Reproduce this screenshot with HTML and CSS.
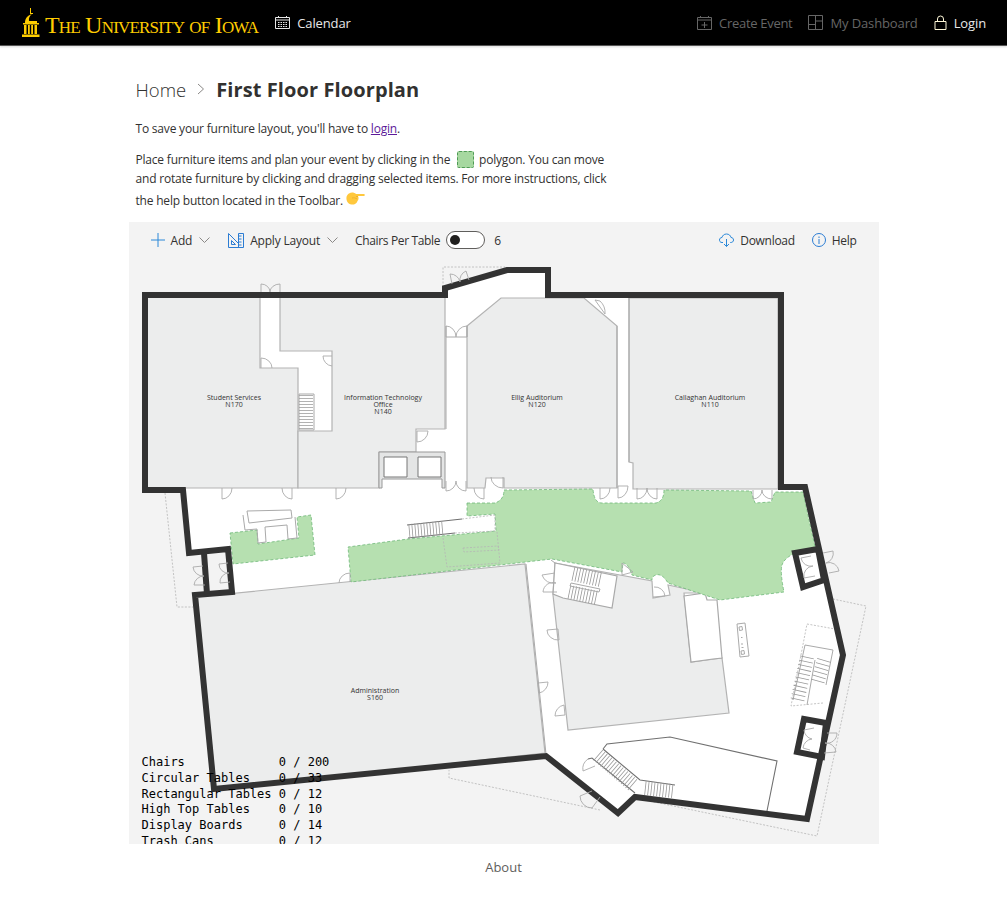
FILE: index.html
```html
<!DOCTYPE html>
<html lang="en">
<head>
    <meta charset="UTF-8">
    <meta name="viewport" content="width=device-width, initial-scale=1.0">
    <title>First Floor Floorplan</title>
    <link rel="stylesheet" href="styles.css">
</head>
<body>
    <!-- Top bar -->
    <header class="topbar">
        <a class="brand" href="#">
            <svg class="brand-mark" width="18" height="30" viewBox="0 0 18 30">
                <path d="M8 0h1v6H8zM9 5h2v1H9z"/>
                <path d="M3 15c0-4 2-7.500 7-9-2.500 2-3.500 4-3 7h8v2z"/>
                <path d="M1 15h16v1.500H1zM2 17h2.500v9H2zM6 17h1.800v9H6zM9.200 17H11v9H9.200zM12.500 17H15v9h-2.500zM0 26.500h17.500V29H0z"/>
            </svg>
            <span class="brand-name">The University of Iowa</span>
        </a>
        <a class="nav-link nav-calendar" href="#">
            <svg width="15" height="15" viewBox="0 0 15 15" fill="none" stroke="currentColor">
                <path d="M.5 2.500h14v11H.5zM.5 5h14M3.500 1v2M11.500 1v2"/>
                <path stroke-dasharray="1.500 1" d="M3 7.500h9M3 9.500h9M3 11.500h9"/>
            </svg>
            Calendar
        </a>
        <nav class="nav-right">
            <a class="nav-link nav-muted nav-create" href="#">
                <svg width="15" height="15" viewBox="0 0 15 15" fill="none" stroke="currentColor">
                    <path d="M.5 2.500h14v12H.5zM.5 5h14M3.500 1v2M11.500 1v2M7.500 7v6M4.500 10h6"/>
                </svg>
                Create Event
            </a>
            <a class="nav-link nav-muted" href="#">
                <svg width="15" height="15" viewBox="0 0 15 15" fill="none" stroke="currentColor">
                    <path d="M.5.500h14v14H.5zM7.500.500v14M.5 9.500h7M7.500 6h7"/>
                </svg>
                My Dashboard
            </a>
            <a class="nav-link" href="#">
                <svg width="13" height="15" viewBox="0 0 13 15" fill="none" stroke="#fff8d8">
                    <path d="M1 6.500h11v8H1zM3.500 6.500V4a3 3 0 0 1 6 0v2.500"/>
                </svg>
                Login
            </a>
        </nav>
    </header>

    <main class="page">
        <div class="crumbs">
            <a class="crumb-home" href="#">Home</a>
            <svg class="crumb-sep" width="8" height="12" viewBox="0 0 8 12" fill="none" stroke="#8a8886">
                <path d="M1 1l5.500 5L1 11"/>
            </svg>
            <h1 class="crumb-title">First Floor Floorplan</h1>
        </div>

        <p class="intro">To save your furniture layout, you'll have to <a href="#">login</a>.</p>
        <p class="intro intro-long">
            Place furniture items and plan your event by clicking in the
            <span class="swatch"></span>
            polygon. You can move and rotate furniture by clicking and dragging selected items. For more instructions, click the help button located in the Toolbar.
            <svg class="hand" width="19" height="15" viewBox="0 0 19 15">
                <path fill="#ffc83d" d="M3 1.500c2-1.500 5-1.500 7 .5h8c1 0 1 2 0 2h-6c1 2 .5 4-.5 5-1 3-4 4-6 3.500C2 12 0 9 .5 5 .700 3.500 2 2 3 1.500z"/>
                <path fill="none" stroke="#e0a526" stroke-width=".6" d="M10 4.500h2M6 6c2-.5 4 0 5 1"/>
            </svg>
        </p>

        <section class="planner">
            <div class="toolbar">
                <button class="tool">
                    <svg width="14" height="14" viewBox="0 0 14 14" stroke="#2b88d8" fill="none"><path d="M7 0v14M0 7h14"/></svg>
                    Add
                    <svg class="chev" width="11" height="6" viewBox="0 0 11 6" fill="none" stroke="#8a8886"><path d="M.5.500l5 5 5-5"/></svg>
                </button>
                <button class="tool tool-layout">
                    <svg width="16" height="15" viewBox="0 0 16 15" stroke="#2b7cd3" fill="none">
                        <path d="M.5.500v14h15V.5h-5v14M.5.500l10 10M3.500 11.500h4l-4-4zM10.500 3h3M10.500 6h3M10.500 9h3M10.500 12h3"/>
                    </svg>
                    Apply Layout
                    <svg class="chev" width="11" height="6" viewBox="0 0 11 6" fill="none" stroke="#8a8886"><path d="M.5.500l5 5 5-5"/></svg>
                </button>
                <div class="chairs">
                    <span>Chairs Per Table</span>
                    <span class="toggle"></span>
                    <span class="chairs-count">6</span>
                </div>
                <div class="toolbar-end">
                    <button class="tool">
                        <svg width="15" height="14" viewBox="0 0 15 14" stroke="#2b88d8" fill="none">
                            <path d="M4 9.500H3C1 9.500.5 8 .5 7c0-1.500 1-2.500 2.500-2.500C3.500 2.500 5 1 7.500 1c2.500 0 4 1.500 4.500 3.500 1.500 0 2.500 1 2.500 2.500s-1 2.500-3 2.500h-.5M7.500 6v7.500M5 11l2.500 2.500L10 11"/>
                        </svg>
                        Download
                    </button>
                    <button class="tool">
                        <svg width="14" height="14" viewBox="0 0 14 14" stroke="#2b7cd3" fill="none">
                            <circle cx="7" cy="7" r="6.500"/><path d="M7 6v5M7 3.500v1.500"/>
                        </svg>
                        Help
                    </button>
                </div>
            </div>

            <svg class="plan" width="750" height="586" viewBox="129 258 750 586">
                <!-- dashed site outline -->
                <path class="site" d="M443 287V267H505M165 493L177 607H193M833 599L866 606 817 836 635 798M600 810L449 778V770"/>

                <!-- floor -->
                <path class="floor" d="M145 295H445V288L507 270H548V295H781V487H805L843 655 807 819 635 797 618 813 546 756 214 789 195 595 232 592 228 549 189 553 183 490H145Z"/>

                <!-- rooms -->
                <path class="room" d="M147 297H260V368H298V488H147Z"/>
                <path class="room" d="M280 297H445V429H416V452H379V488H298V431H332V351H280Z"/>
                <path class="room" d="M467 326L501 298H584L617 326V488H504V478H486L485 488H467Z"/>
                <path class="room" d="M629 298H778V489H633V463L629 462Z"/>
                <path class="room" d="M197 597L525 564 545 753 216 790Z"/>
                <path class="room" d="M555 563L652 581 653 598 670 595 668 585 705 593H684L691 662 722 658 729 713 568 730 553 595Z"/>
                <path class="room-open" d="M684 596L705 593 707 600H717L722 658 713 659 691 662ZM555 563L617 576 612 608 563 598 553 594Z"/>
                <path class="line" d="M446 337V429M467 326V337M446 337H467M446 326V337M551 560L555 563M526 564L546 754M629 298V462M617 326V488"/>

                <!-- elevators -->
                <path class="lift" d="M379 452H445V488H442V479H382V488H379Z"/>
                <path class="lift-car" d="M384 457H407V477H384ZM418 457H441V477H418Z"/>

                <!-- usable area -->
                <path class="area" d="M467 503H495Q504 500 504 490L593 489Q594 503 602 503H656Q664 501 664 490L751 491 755 503 771 502 775 492H803L815 547Q786 553 782 565 780 572 784 592L720 600 668 583Q662 573 656 575 652 576 652 580L632 575Q628 563 623 563L622 572 552 559 351 582 348 547 408 539 496 531 495 514 467 516Z"/>
                <path class="area" d="M230 533L257 530 258 544 299 538 297 517 311 515 315 555 233 564Z"/>

                <!-- fixtures -->
                <path class="line" d="M247 511L291 510 292 518 249 523ZM243 515L245 530 257 529 258 543 266 542 265 527 287 525 288 539 297 538 295 517"/>
                <path class="site" d="M443 538L447 567 500 563 497 532M463 548L498 546 499 550 464 552ZM807 624L835 629M823 703L791 706 807 624M462 519L495 515V531L455 533"/>
                <path class="line" d="M737 624L745 623 749 656 740 657ZM739 627L742 626.500 742.500 630 739.500 630.500ZM741 637.500h1.500M742 643v2M741.500 647.500h2M741 651L744 650.500 744.500 654 741.500 654.500Z"/>
                <path class="line-dark" d="M407 525L462 519M408 538L455 533"/>
                <line class="tread" x1="409" y1="531" x2="443" y2="528"/>
                <path class="line" d="M299 394H314V430H299Z"/>
                <line class="tread" x1="306" y1="395" x2="306" y2="429"/>

                <!-- stairs, upper right of the south wing -->
                <line class="tread" x1="573" y1="574" x2="601" y2="580"/>
                <line class="tread" x1="569" y1="592" x2="598" y2="598"/>
                <path class="line" d="M571 583L600 589 599 592 570 586Z"/>

                <!-- stairs, east side -->
                <path class="line" d="M805 645L833 650 826 685M805 645L793 700M815 660L807 705"/>
                <line class="tread tread-wide" x1="807" y1="657" x2="797" y2="702"/>
                <line class="tread tread-wide" x1="824" y1="660" x2="817" y2="684"/>

                <!-- stairs and hall, south side -->
                <path class="line-dark" d="M603 749L607 744 670 737 777 761 767 811M603 749L640 780 675 785M588 759L592 758 635 793"/>
                <line class="tread" x1="598" y1="755" x2="634" y2="786"/>
                <line class="tread" x1="645" y1="788" x2="673" y2="791"/>

                <!-- walls -->
                <path class="wall" d="M145 295H445V288L507 270H548V295H781V487H805L843 655 807 819 635 797 618 813 546 756 214 789 195 595 232 592 228 549 189 553 183 490H145Z"/>
                <path class="wall" d="M204 553L207 594M795 553L818 549 824 580 803 587ZM804 719L826 723 822 757 797 752Z"/>

                <!-- doors -->
                <path class="door" d="M261 292V284A9 8 0 0 1 270 292A10 8 0 0 1 280 284V292
                    M452 284L450 274A10 10 0 0 1 460 282A10 10 0 0 1 466 271L469 280
                    M446 337V326A10 11 0 0 1 456 337A11 11 0 0 1 467 326V337
                    M332 356H323A10 10 0 0 0 332 366M261 368V358A11 10 0 0 1 272 368M417 442V431H428A11 11 0 0 1 417 442
                    M222 499V488M222 499A10 11 0 0 0 232 488M292 499V488M292 499A10 11 0 0 1 282 488M336 499V488M336 499A10 11 0 0 0 346 488
                    M446 481V491A10 10 0 0 0 456 481A10 10 0 0 0 466 491V481
                    M484 499V488M484 499A10 11 0 0 1 474 488M503 477V488A12 11 0 0 1 491 477
                    M600 499V488M600 499A10 11 0 0 0 610 488M618 498V486H628A10 12 0 0 1 618 498
                    M637 488V499A10 11 0 0 0 647 488A10 11 0 0 0 657 499V488M753 490V499A9 9 0 0 0 762 490A10 9 0 0 0 772 499V490
                    M595 300L605 314A16 16 0 0 0 600 301Z
                    M811 556L801 558A10 10 0 0 0 813 566A10 10 0 0 0 804 578L815 576
                    M823 553L833 551A10 10 0 0 1 826 563A10 10 0 0 1 839 571L829 573
                    M203 566L193 567A10 10 0 0 0 204 576A10 10 0 0 0 194 585L205 585
                    M228 563L219 564A9 9 0 0 0 229 573A9 9 0 0 0 220 583L230 582
                    M339 583A11 10 0 0 1 350 573V582
                    M555 573L542 575A12 12 0 0 0 556 583A10 10 0 0 0 543 592L557 592
                    M547 630L558 629 559 640A11 10 0 0 1 547 630M548 682L538 683 539 693A11 11 0 0 0 548 682M555 716L565 715 564 705A11 11 0 0 0 555 716
                    M622 563L633 572 622 575ZM653 597L665 596A10 10 0 0 0 654 587
                    M814 728L804 730A10 10 0 0 0 812 739A10 10 0 0 0 803 748L810 750
                    M827 733L837 733A10 10 0 0 1 825 743A10 10 0 0 1 836 752L824 753
                    M595 766L583 771A12 12 0 0 1 588 759M592 791L580 796A12 12 0 0 0 592 808L600 797"/>

                <!-- room labels -->
                <g class="labels">
                    <text x="234" y="400">Student Services</text>
                    <text x="234" y="407">N170</text>
                    <text x="383" y="400">Information Technology</text>
                    <text x="383" y="407">Office</text>
                    <text x="383" y="414">N140</text>
                    <text x="537" y="400">Ellig Auditorium</text>
                    <text x="537" y="407">N120</text>
                    <text x="710" y="400">Callaghan Auditorium</text>
                    <text x="710" y="407">N110</text>
                    <text x="375" y="693">Administration</text>
                    <text x="375" y="700">S160</text>
                </g>
            </svg>

            <pre class="counts">Chairs             0 / 200
Circular Tables    0 / 33
Rectangular Tables 0 / 12
High Top Tables    0 / 10
Display Boards     0 / 14
Trash Cans         0 / 12</pre>
        </section>
    </main>

    <footer class="foot">
        <a href="#">About</a>
    </footer>
</body>
</html>
```

FILE: styles.css
```css
body {
    margin: 0;
    background: #fff;
    color: #323130;
    font-family: "Open Sans", "Noto Sans", sans-serif;
    font-size: 13px;
}

a {
    color: inherit;
    text-decoration: none;
}

/* Top bar */
.topbar {
    display: flex;
    align-items: center;
    height: 45px;
    padding: 0 21px 0 22px;
    background: #000;
    border-bottom: 1px solid #555;
    box-shadow: 0 1px 2px rgba(0, 0, 0, 0.15);
}

.brand {
    display: flex;
    align-items: flex-end;
    gap: 5px;
    color: #ffcd00;
}

.brand-mark {
    fill: #ffcd00;
    margin-bottom: -1px;
}

.brand-name {
    font-family: "Liberation Serif", serif;
    font-size: 24px;
    font-variant: small-caps;
    letter-spacing: -0.8px;
    line-height: 24px;
    white-space: nowrap;
}

.nav-link {
    display: flex;
    align-items: center;
    gap: 7px;
    color: #e8e8e8;
    font-size: 13px;
    letter-spacing: -0.12px;
}

.nav-calendar {
    margin-left: 17px;
}

.nav-right {
    display: flex;
    align-items: center;
    gap: 16px;
    margin-left: auto;
}

.nav-muted {
    color: #666;
}

.nav-create {
    letter-spacing: -0.3px;
}

/* Page */
.page {
    width: 750px;
    margin: 0 auto;
}

.crumbs {
    display: flex;
    align-items: center;
    height: 32px;
    margin: 27px 0 0 7px;
}

.crumb-home {
    font-size: 18.500px;
    font-weight: 300;
}

.crumb-sep {
    margin: 0 11px;
}

.crumb-title {
    margin: 0;
    font-size: 20px;
    font-weight: 700;
    letter-spacing: 0.1px;
}

.intro {
    max-width: 480px;
    margin: 14px 0 0 7px;
    font-size: 12px;
    letter-spacing: -0.2px;
    line-height: 19px;
}

.intro a {
    color: #5c1a99;
    text-decoration: underline;
}

.intro-long {
    margin-top: 12px;
}

.swatch {
    display: inline-block;
    width: 15px;
    height: 15px;
    margin: 0 2px 0 4px;
    vertical-align: -4px;
    background: #a6d8a0;
    border: 1px dashed #4f9a55;
    border-radius: 2px;
}

.hand {
    margin-top: 4px;
    vertical-align: -2px;
}

/* Floorplan */
.planner {
    position: relative;
    height: 622px;
    margin-top: 12px;
    overflow: hidden;
    background: #f3f3f3;
}

.toolbar {
    display: flex;
    align-items: center;
    height: 36px;
    padding: 0 22px;
}

.tool {
    display: flex;
    align-items: center;
    gap: 6px;
    padding: 0;
    margin-right: 15px;
    color: #323130;
    font: inherit;
    font-size: 12px;
    letter-spacing: -0.2px;
    background: none;
    border: 0;
}

.tool-layout {
    margin-left: 3px;
    margin-right: 14px;
}

.chev {
    margin-left: 1px;
}

.chairs {
    display: flex;
    align-items: center;
    gap: 6px;
    margin-left: 3px;
    font-size: 12px;
    letter-spacing: -0.35px;
}

.chairs-count {
    margin-left: 3px;
}

.toggle {
    position: relative;
    width: 37px;
    height: 16px;
    background: #fff;
    border: 1px solid #605e5c;
    border-radius: 9px;
}

.toggle::after {
    content: "";
    position: absolute;
    top: 3px;
    left: 3px;
    width: 10px;
    height: 10px;
    background: #201f1e;
    border-radius: 50%;
}

.toolbar-end {
    display: flex;
    margin-left: auto;
}

.toolbar-end .tool {
    margin-right: 17px;
    letter-spacing: -0.3px;
}

.toolbar-end .tool:last-child {
    margin-right: 0;
}

.plan {
    display: block;
}

.site {
    fill: none;
    stroke: #b5b5b5;
    stroke-width: 0.8;
    stroke-dasharray: 2 1.500;
}

.floor {
    fill: #fff;
}

.room {
    fill: #eceded;
    stroke: #b3b3b3;
    stroke-width: 1.2;
}

.room-open {
    fill: #fff;
    stroke: #a9a9a9;
    stroke-width: 1.2;
}

.line {
    fill: none;
    stroke: #aaa;
    stroke-width: 1;
}

.line-dark {
    fill: none;
    stroke: #707070;
    stroke-width: 1.1;
}

.lift {
    fill: #e4e5e5;
    stroke: #999;
}

.lift-car {
    fill: #fff;
    stroke: #777;
}

.area {
    fill: #b6e0b0;
    stroke: #6fb878;
    stroke-width: 0.8;
    stroke-dasharray: 3 2;
}

.tread {
    stroke: #999;
    stroke-width: 14;
    stroke-dasharray: 0.8 2.200;
}

.tread-wide {
    stroke-dasharray: 0.8 3.500;
}

.wall {
    fill: none;
    stroke: #333;
    stroke-width: 6;
}

.door {
    fill: none;
    stroke: #aaa;
    stroke-width: 0.9;
}

.labels {
    fill: #333;
    font-family: "Open Sans", sans-serif;
    font-size: 7px;
    text-anchor: middle;
}

.counts {
    position: absolute;
    top: 533px;
    left: 13px;
    margin: 0;
    color: #000;
    font-family: "DejaVu Sans Mono", monospace;
    font-size: 12px;
    line-height: 15.800px;
}

/* Footer */
.foot {
    margin-top: 14px;
    color: #605e5c;
    font-size: 13px;
    text-align: center;
}
```
